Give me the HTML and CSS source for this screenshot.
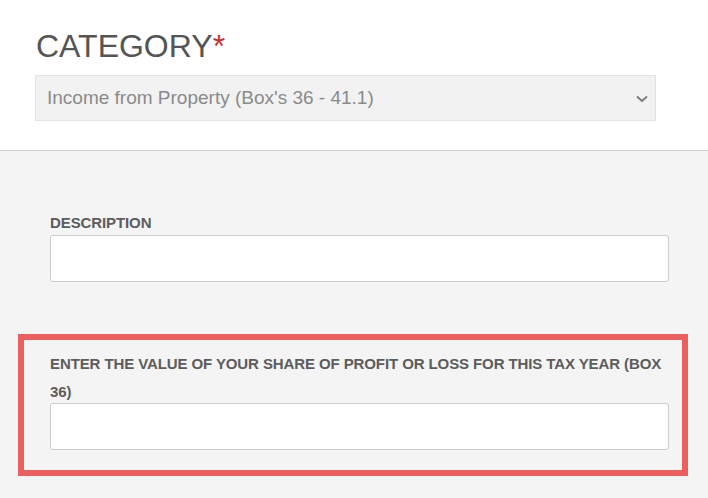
FILE: index.html
```html
<!DOCTYPE html>
<html lang="en">
<head>
<meta charset="utf-8">
<title>Category</title>
<link rel="stylesheet" href="styles.css">
</head>
<body>
<div class="top">
  <h1 class="cat-title">CATEGORY<span class="req">*</span></h1>
  <div class="select">
    <span class="select-text">Income from Property (Box's 36 - 41.1)</span>
    <svg class="chev" width="12" height="8" viewBox="0 0 12 8"><path d="M1 1.5 L6 6 L11 1.5" fill="none" stroke="#7a7a7a" stroke-width="1.8"/></svg>
  </div>
</div>
<div class="fields">
  <div class="group">
    <label class="lbl">DESCRIPTION</label>
    <input class="inp" type="text">
  </div>
  <div class="group highlight">
    <label class="lbl">ENTER THE VALUE OF YOUR SHARE OF PROFIT OR LOSS FOR THIS TAX YEAR (BOX 36)</label>
    <input class="inp" type="text">
  </div>
</div>
</body>
</html>
```
FILE: styles.css
```css
html, body {
  margin: 0;
  padding: 0;
  background: #f4f4f4;
  font-family: "Liberation Sans", Arial, sans-serif;
}
.top {
  background: #fff;
  padding: 30px 0 29px 35px;
  border-bottom: 1px solid #cfcfcf;
}
.cat-title {
  margin: 0 0 13px 1px;
  font-size: 32px;
  line-height: 32px;
  font-weight: normal;
  color: #555;
}
.req {
  color: #c9302c;
}
.select {
  width: 621px;
  height: 46px;
  box-sizing: border-box;
  background: #f2f2f2;
  border: 1px solid #e2e2e2;
  display: flex;
  align-items: center;
  justify-content: space-between;
  padding: 0 7px 0 11px;
}
.select-text {
  font-size: 19px;
  color: #8a8a8a;
}
.chev {
  display: block;
  margin-top: 2px;
}
.fields {
  padding-top: 58px;
}
.group {
  margin-left: 50px;
  width: 619px;
}
.lbl {
  display: block;
  font-size: 15px;
  letter-spacing: -0.1px;
  font-weight: bold;
  line-height: 28px;
  color: #5c5c5c;
  margin-bottom: -2px;
}
.inp {
  display: block;
  width: 100%;
  height: 47px;
  box-sizing: border-box;
  background: #fff;
  border: 1px solid #cccccc;
  border-radius: 3px;
  margin: 0;
  padding: 0 12px;
}
.highlight {
  margin-top: 52px;
  margin-left: 18px;
  width: 619px;
  border: 6px solid #eb5f5f;
  padding: 10px 13px 20px 26px;
}
.highlight .lbl {
  margin-bottom: -3px;
}
```
